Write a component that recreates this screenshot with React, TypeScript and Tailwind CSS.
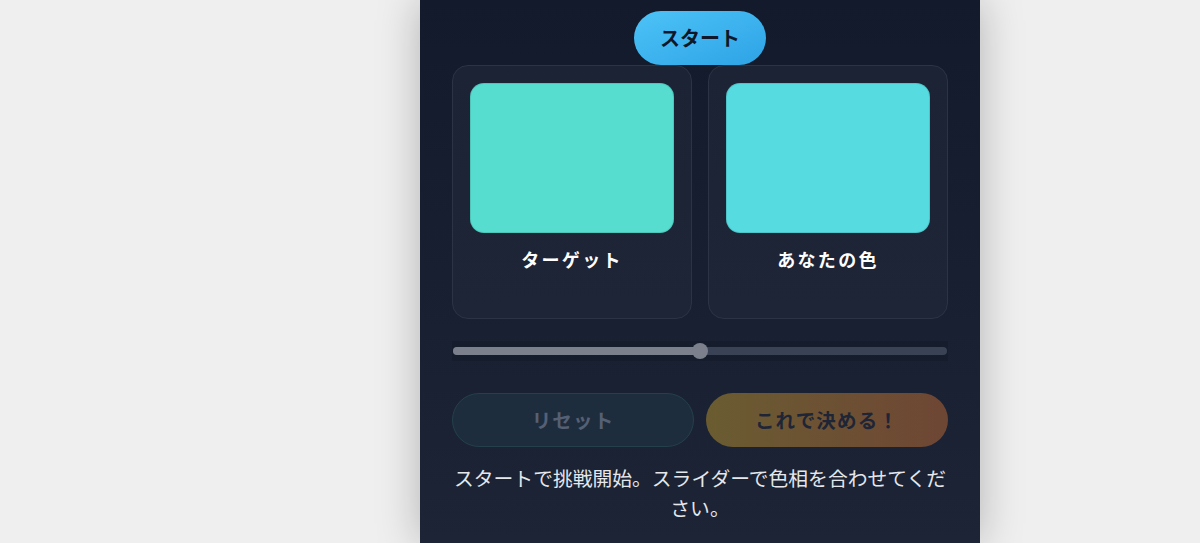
import { useState } from 'react';

const font = { fontFamily: '"Noto Sans CJK JP", "Noto Sans", sans-serif' };

function Swatch({ color, label }: { color: string; label: string }) {
  return (
    <div className="flex h-[254px] flex-col items-center rounded-2xl border border-[#2b3345] bg-gradient-to-b from-[#1c2334] to-[#1e2537] p-[17px]">
      <div
        className="h-[150px] w-full rounded-[14px] border border-black/10"
        style={{ backgroundColor: color }}
      />
      <div className="mt-[13px] text-[18px] font-bold leading-[26px] tracking-[0.13em] text-white">
        {label}
      </div>
    </div>
  );
}

export default function App() {
  const [hue] = useState(50);

  return (
    <div className="flex min-h-screen justify-center bg-[#efefef] pl-[200px]" style={font}>
      <div className="flex min-h-screen w-[560px] shrink-0 flex-col bg-gradient-to-b from-[#121a2b] to-[#1c2436] px-8 pt-[11px] shadow-[0_0_40px_rgba(0,0,0,0.25)]">
        <div className="flex justify-center">
          <button className="h-[54px] w-[132px] rounded-full bg-gradient-to-br from-[#4cc3f7] to-[#2ea3e6] text-[20px] font-bold text-[#0f172a]">
            スタート
          </button>
        </div>

        <div className="grid grid-cols-2 gap-4">
          <Swatch color="#56ddd0" label="ターゲット" />
          <Swatch color="#56dbe0" label="あなたの色" />
        </div>

        <div className="mt-[22px] flex h-[20px] items-center bg-black/10">
          <div className="relative mx-px h-2 w-full rounded-full bg-[#3a4355]">
            <div
              className="h-2 rounded-full bg-[#7b808c]"
              style={{ width: `${hue}%` }}
            />
            <div
              className="absolute top-1/2 h-4 w-4 -translate-x-1/2 -translate-y-1/2 rounded-full bg-[#7b808c]"
              style={{ left: `${hue}%` }}
            />
          </div>
        </div>

        <div className="mt-[32px] grid grid-cols-2 gap-3">
          <button className="h-[54px] rounded-full border border-[#24404b] bg-[#1e2d3d] text-[19.5px] font-bold tracking-[0.06em] text-[#566074]">
            リセット
          </button>
          <button className="h-[54px] rounded-full bg-gradient-to-r from-[#6a5c31] to-[#6e4634] text-[19.5px] font-bold tracking-[0.06em] text-[#1e2536]">
            これで決める！
          </button>
        </div>

        <p className="mt-[16px] text-center text-[19.8px] leading-[30px] text-[#e5e7eb]">
          スタートで挑戦開始。スライダーで色相を合わせてください。
        </p>
      </div>
    </div>
  );
}
